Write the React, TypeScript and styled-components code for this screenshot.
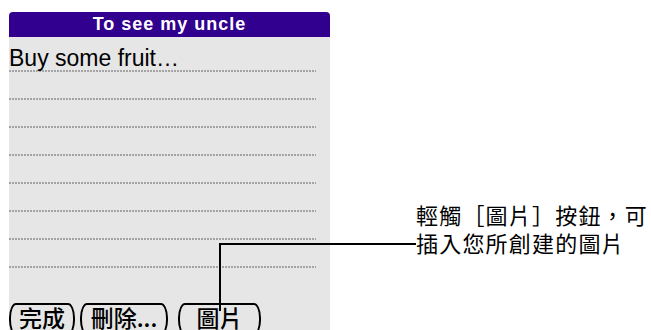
import React from "react";
import styled, { createGlobalStyle } from "styled-components";

const Global = createGlobalStyle`
  html, body { margin: 0; padding: 0; background: #ffffff; }
  body { font-family: "Liberation Sans", Arial, sans-serif; }
`;

const Page = styled.div`
  position: relative;
  width: 651px;
  height: 330px;
  overflow: hidden;
  display: flex;
  align-items: flex-start;
  background: #ffffff;
`;

const Screen = styled.div`
  width: 321px;
  height: 330px;
  margin: 12px 0 0 9px;
  display: flex;
  flex-direction: column;
  flex-shrink: 0;
`;

const TitleBar = styled.div`
  height: 25px;
  background: #32008e;
  border-radius: 4px 4px 0 0;
  color: #ffffff;
  display: flex;
  align-items: center;
  justify-content: center;
  font-family: "Liberation Sans", Arial, sans-serif;
  font-weight: 700;
  font-size: 18px;
  letter-spacing: 1px;
`;

const Body = styled.div`
  flex: 1;
  background: #e6e6e6;
  padding-top: 7px;
  display: flex;
  flex-direction: column;
`;

const Row = styled.div`
  width: 307px;
  height: 28px;
  box-sizing: border-box;
  font-family: "Liberation Sans", Arial, sans-serif;
  font-size: 23px;
  line-height: 28px;
  color: #000000;
  white-space: nowrap;
  background-image: linear-gradient(to right, #a4a4a4 2px, transparent 2px);
  background-size: 3px 2px;
  background-repeat: repeat-x;
  background-position: left bottom;
`;

const ButtonBar = styled.div`
  display: flex;
  margin-top: 35px;
`;

const SoftButton = styled.div<{ $w: number; $gap: number }>`
  width: ${(p) => p.$w}px;
  margin-left: ${(p) => p.$gap}px;
  height: 32px;
  box-sizing: border-box;
  border: 2px solid #000000;
  border-radius: 7px / 15px;
  display: flex;
  justify-content: center;
  font-family: "Noto Sans CJK TC", sans-serif;
  font-weight: 500;
  font-size: 23px;
  line-height: 24px;
  color: #000000;
  flex-shrink: 0;
`;

const Callout = styled.div`
  margin: 200px 0 0 86px;
  font-family: "Noto Sans CJK TC", sans-serif;
  font-size: 22px;
  line-height: 28px;
  letter-spacing: 1.2px;
  color: #000000;
  white-space: nowrap;
`;

const CalloutLine = styled.div``;

const LeaderH = styled.div`
  position: absolute;
  left: 219px;
  top: 243px;
  width: 197px;
  height: 2px;
  background: #000000;
`;

const LeaderV = styled.div`
  position: absolute;
  left: 219px;
  top: 243px;
  width: 2px;
  height: 68px;
  background: #000000;
`;

export default function App() {
  return (
    <>
      <Global />
      <Page>
        <Screen>
          <TitleBar>To see my uncle</TitleBar>
          <Body>
            <Row>Buy some fruit…</Row>
            <Row />
            <Row />
            <Row />
            <Row />
            <Row />
            <Row />
            <Row />
            <ButtonBar>
              <SoftButton $w={66} $gap={0}>完成</SoftButton>
              <SoftButton $w={88} $gap={5}>刪除...</SoftButton>
              <SoftButton $w={83} $gap={10}>圖片</SoftButton>
            </ButtonBar>
          </Body>
        </Screen>
        <Callout>
          <CalloutLine>輕觸［圖片］按鈕，可</CalloutLine>
          <CalloutLine>插入您所創建的圖片</CalloutLine>
        </Callout>
        <LeaderH />
        <LeaderV />
      </Page>
    </>
  );
}
